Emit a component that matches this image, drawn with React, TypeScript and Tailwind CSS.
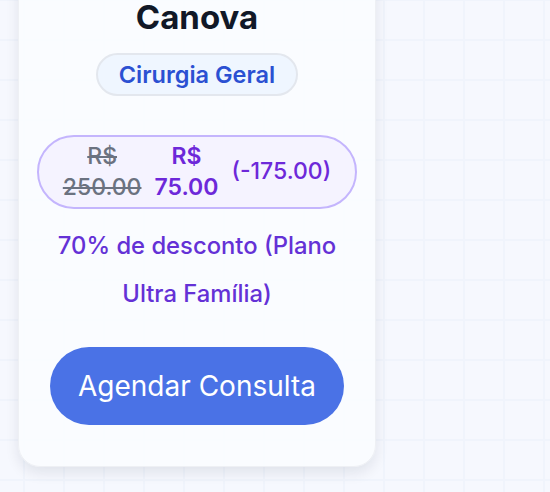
export default function App() {
  return (
    <div
      className="relative h-[492px] w-[550px] overflow-hidden bg-[#f6f8fe] bg-[linear-gradient(to_right,#f0f4fc_2px,transparent_2px),linear-gradient(to_bottom,#f0f4fc_2px,transparent_2px)] bg-size-[40px_40px] bg-position-[23px_-1px]"
      style={{ fontFamily: "Inter, 'Noto Sans', sans-serif" }}
    >
      <div className="ml-[18px] mt-[-60px] w-[358px] rounded-[22px] border border-[#eef0f4] bg-[#fafcff]/95 px-5 pt-[61px] pb-[41px] shadow-[0_6px_14px_rgba(15,23,42,0.09)]">
        <div className="flex flex-col items-center text-center">
          <h2 className="text-[33px] font-bold leading-[30px] text-[#111827]">Canova</h2>

          <span className="mt-[21px] rounded-full border-2 border-[#e3e7ee] bg-[#eff6ff] px-[21px] py-[6px] text-[23.5px] font-semibold leading-[27px] text-[#2b50d2]">
            Cirurgia Geral
          </span>

          <div className="mt-[39px] flex w-[320px] items-center justify-center gap-[13px] rounded-full border-2 border-[#c4b5fd] bg-[#f5f3ff] px-5 py-[4px]">
            <div className="flex flex-col text-[23px] font-medium leading-[31px] text-[#6b7280] line-through">
              <span>R$</span>
              <span>250.00</span>
            </div>
            <div className="flex flex-col text-[23px] font-semibold leading-[31px] text-[#6d28d9]">
              <span>R$</span>
              <span>75.00</span>
            </div>
            <span className="mb-[2px] text-[23px] font-medium leading-[31px] text-[#6d28d9]">(-175.00)</span>
          </div>

          <p className="mt-[13px] w-[300px] text-[23.8px] font-medium leading-[48px] text-[#6431d6]">
            70% de desconto (Plano Ultra Família)
          </p>

          <button className="mt-[29px] h-[78px] w-[294px] rounded-full bg-[#4a72e6] text-[28px] font-normal text-white">
            Agendar Consulta
          </button>
        </div>
      </div>
    </div>
  );
}
